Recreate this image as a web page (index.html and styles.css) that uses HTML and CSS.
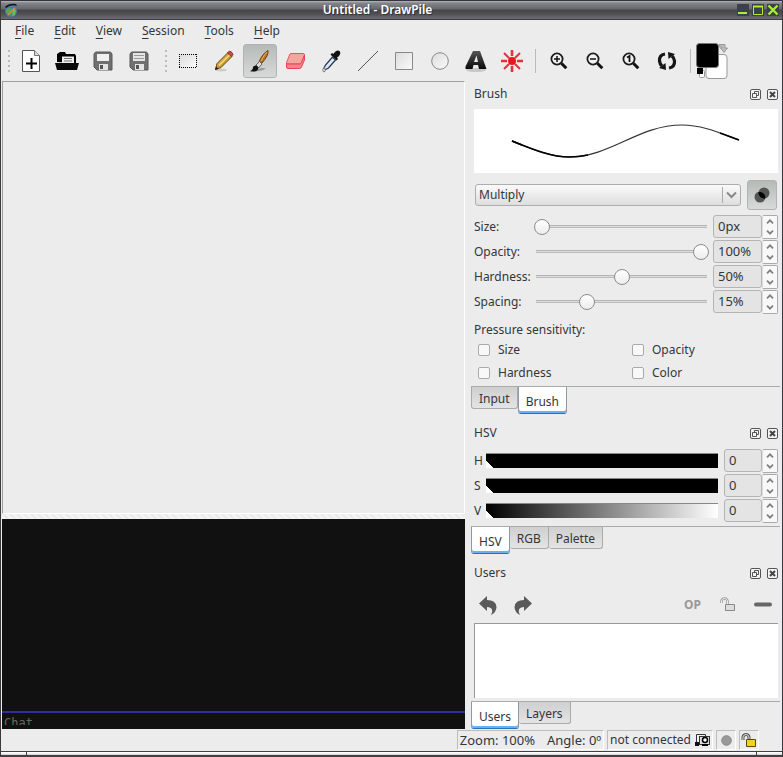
FILE: index.html
```html
<!DOCTYPE html>
<html lang="en">
<head>
<meta charset="utf-8">
<title>Untitled - DrawPile</title>
<link rel="stylesheet" href="styles.css">
</head>
<body>
<svg width="0" height="0" class="defs" aria-hidden="true">
  <defs>
    <linearGradient id="pale" x1="0" y1="0" x2="1" y2="1"><stop offset="0" stop-color="#dcdcdc"/><stop offset="1" stop-color="#fafafa"/></linearGradient>
    <linearGradient id="wood" x1="0" y1="0" x2="1" y2="1"><stop offset="0" stop-color="#f0c860"/><stop offset="1" stop-color="#a87414"/></linearGradient>
    <linearGradient id="ink" x1="0" y1="0" x2="0" y2="1"><stop offset="0" stop-color="#555"/><stop offset="1" stop-color="#0a0a0a"/></linearGradient>
    <symbol id="float" viewBox="0 0 11 11"><rect x=".5" y=".5" width="10" height="10" rx="1.5" fill="#f4f4f4" stroke="#555"/><path d="M4.5 4V2.5h4v4H7M2.500 4.500h4v4h-4z" fill="none" stroke="#555"/></symbol>
    <symbol id="close" viewBox="0 0 11 11"><rect x=".5" y=".5" width="10" height="10" rx="1.500" fill="#f4f4f4" stroke="#555"/><path d="M3 3l5 5M8 3l-5 5" stroke="#444" stroke-width="2"/></symbol>
    <symbol id="up" viewBox="0 0 8 5"><path d="M1 4.300L4 1.300l3 3" fill="none" stroke="#808080" stroke-width="1.800"/></symbol>
    <symbol id="down" viewBox="0 0 8 5"><path d="M1 .7l3 3 3-3" fill="none" stroke="#808080" stroke-width="1.800"/></symbol>
    <symbol id="lens" viewBox="0 0 18 18"><circle cx="7" cy="7" r="5.600" fill="#f2f2f2" stroke="#1c1c1c" stroke-width="1.800"/><path d="M11.300 11.300l5 5" stroke="#111" stroke-width="3"/></symbol>
  </defs>
</svg>
<div class="window">
  <header class="titlebar">
    <svg class="logo" width="14" height="15" viewBox="0 0 14 15"><circle cx="7" cy="8" r="6" fill="#3f7fb4"/><path d="M2 10Q1 6 5 5l4 1-3 6z" fill="#5aa548"/><path d="M9 5l3 2-1 5-3 1z" fill="#6cbc5c"/><path d="M4 12L11 5" stroke="#e08a2c" stroke-width="1.500"/><path d="M1 4Q5 0 12 1l1 2Q7 1 2 5z" fill="#151515"/></svg>
    <h1>Untitled - DrawPile</h1>
    <div class="winbtns">
      <button aria-label="Minimize"><svg width="12" height="12"><path d="M1 9h9" stroke="#a8f030" stroke-width="2"/></svg></button>
      <button aria-label="Maximize"><svg width="12" height="12"><path d="M1.500 2.500h9v8h-9z" fill="none" stroke="#a8f030"/><path d="M1 2.500h10" stroke="#a8f030" stroke-width="2"/></svg></button>
      <button aria-label="Close window"><svg width="12" height="12"><path d="M1.500 1.500l9 9M10.500 1.500l-9 9" stroke="#a8f030" stroke-width="2.300"/></svg></button>
    </div>
  </header>

  <nav class="menubar">
    <button><u>F</u>ile</button><button><u>E</u>dit</button><button><u>V</u>iew</button><button><u>S</u>ession</button><button><u>T</u>ools</button><button><u>H</u>elp</button>
  </nav>

  <div class="toolbar">
    <span class="grip"></span>
    <button aria-label="New"><svg width="20" height="24"><path d="M1.500 1.500h12l5 5v16h-17z" fill="#fff" stroke="#555"/><path d="M13.500 1.500v5h5" fill="#ddd" stroke="#777"/><path d="M5 14.500h11M10.500 9v11" stroke="#000" stroke-width="2"/></svg></button>
    <button aria-label="Open"><svg width="24" height="20"><path d="M2 11V3l3-2h5l1 2h9l1 2v7z" fill="#000"/><path d="M7 5.500h12v7H7z" fill="#eee"/><path d="M9 7.500h8M9 10h8" stroke="#777"/><path d="M0 12h24l-2 7H2z" fill="#0a0a0a"/></svg></button>
    <button aria-label="Save"><svg width="20" height="20"><path d="M2.500 1h15L19 3v16H4l-3-3V3z" fill="#707070" stroke="#585858"/><path d="M4 3h12v7H4z" fill="#f0f0f0"/><path d="M6 13h9v6H6z" fill="#e4e4e4"/><path d="M7 14h3v4H7z" fill="#555"/></svg></button>
    <button aria-label="Save as"><svg width="20" height="20"><path d="M2.500 1h15L19 3v16H4l-3-3V3z" fill="#707070" stroke="#585858"/><path d="M4 2h12v8H4z" fill="#e4e4e4"/><path d="M5 4.500h10M5 7.500h10" stroke="#999"/><path d="M6 13h9v6H6z" fill="#e4e4e4"/><path d="M7 14h3v4H7z" fill="#555"/></svg></button>
    <span class="grip second"></span>
    <button aria-label="Selection"><svg width="18" height="14"><path d="M1 1h16v12H1z" fill="url(#pale)"/><path d="M0 .5h18M0 13.500h18M.5 0v14M17.500 0v14" fill="none" stroke="#000" stroke-dasharray="1 1"/></svg></button>
    <button aria-label="Pencil"><svg width="22" height="22"><ellipse cx="8" cy="20" rx="6" ry="1.500" fill="#ccc"/><path d="M4 13.500L15 2.500l4 4L8 17.500l-5.500 2z" fill="url(#wood)" stroke="#6b4b10"/><path d="M6 15.500L17 4.500" stroke="#f5dd80" stroke-width="1.500"/><path d="M14.500 3l2-2q2 0 3.500 3.500l-1.500 2z" fill="#d64842" stroke="#8c2f28"/><path d="M2 20l1-3.500 2.500 2.300z" fill="#222"/></svg></button>
    <button class="on" aria-label="Brush" aria-pressed="true"><svg width="22" height="24"><path d="M4 22q8 1 13-3l-5 0z" fill="#999"/><path d="M10 13Q13 5 19 1.500q1 4.500-6 12.500z" fill="#b87325" stroke="#704312"/><path d="M12 12Q15 6 18 3" stroke="#eab361" fill="none"/><path d="M7 16l3.500-3.500 2.500 2.500-3.500 4z" fill="#ddd" stroke="#666"/><path d="M1 22q3-1 3-4 1-2 3.500-1.500l2 2q-.5 4-4.500 4-3 0-4-.5z" fill="#111"/></svg></button>
    <button aria-label="Eraser"><svg width="22" height="20"><path d="M6 2.500h12q2 0 1.500 2l-3 7q-.5 1.500-2 1.500H3q-2 0-1.500-1.500l3-7.500q.5-1.500 1.500-1.500z" fill="#f3a5a0" stroke="#e85560"/><path d="M1.500 12q0 1 1.500 1h12q1 0 1.500-1.500l3-7.500v5l-3 7q-.5 1.500-2 1.500H3q-1.500 0-1.500-1.500z" fill="#f58288" stroke="#e34755"/></svg></button>
    <button aria-label="Color picker"><svg width="22" height="24"><path d="M13 4q3-3.500 5.500-2 2 2.500-1 5.500l-1.500 1 1 1.500-1.500 1.500-6-6 1.500-1.500 1.500 1z" fill="#111"/><path d="M11.500 8l3 3-7 8-4 2-1-1 2-4z" fill="#dbe7f7" stroke="#263752" stroke-width="1.300"/><path d="M3 18.500q2.500 3.500 0 4.500-2.500-1 0-4.500z" fill="#eee" stroke="#777"/></svg></button>
    <button aria-label="Line"><svg width="22" height="22"><path d="M1 21L21 1" stroke="#555"/></svg></button>
    <button aria-label="Rectangle"><svg width="18" height="18"><path d="M.5.5h17v17H.5z" fill="url(#pale)" stroke="#888"/></svg></button>
    <button aria-label="Ellipse"><svg width="18" height="18"><circle cx="9" cy="9" r="8.300" fill="url(#pale)" stroke="#888"/></svg></button>
    <button aria-label="Text"><svg width="24" height="24"><ellipse cx="12" cy="21" rx="10" ry="2" fill="#c8c8c8"/><path d="M9 2h7l6.500 18H15l-1-4H9.500l-1 4h-7v-2.500zM12.500 6.500L10 13h4z" fill="url(#ink)" fill-rule="evenodd"/></svg></button>
    <button aria-label="Laser pointer"><svg width="24" height="24"><g stroke="#e0323c" stroke-width="2"><path d="M12 1v6M12 17v6M1 12h6M17 12h6" stroke-width="2.600"/><path d="M4 4l5 5M15 15l5 5M20 4l-5 5M9 15l-5 5"/></g><circle cx="12" cy="12" r="4" fill="#e8161d"/></svg></button>
    <span class="sep"></span>
    <button aria-label="Zoom in"><svg width="18" height="18"><use href="#lens"/><path d="M4 7h6M7 4v6" stroke="#111" stroke-width="1.500"/></svg></button>
    <button aria-label="Zoom out"><svg width="18" height="18"><use href="#lens"/><path d="M4 7h6" stroke="#111" stroke-width="1.500"/></svg></button>
    <button aria-label="Actual size"><svg width="18" height="18"><use href="#lens"/><path d="M5 5.500L7.500 4v6" stroke="#111" stroke-width="1.800" fill="none"/></svg></button>
    <button aria-label="Reset rotation"><svg width="20" height="20"><path d="M8 3Q2 4 2.500 10q.3 3 2.500 5M12 17q6-1 5.500-7-.3-3-2.500-5" fill="none" stroke="#161616" stroke-width="3.200"/><path d="M2 17l7 2-.5-7zM18 3l-7-2 .5 7z" fill="#161616"/></svg></button>
    <span class="sep"></span>
    <button class="swatch" aria-label="Colors"><svg width="34" height="36"><rect x="10" y="11.500" width="21" height="24" rx="3" fill="#fff" stroke="#999"/><rect x="3.500" y="27.500" width="5" height="7" rx="1" fill="#fff" stroke="#999"/><path d="M1 25h6v6H1z" fill="#000"/><rect x=".5" y=".5" width="22" height="24" rx="3" fill="#000" stroke="#777"/><path d="M23 1.500h6V5h2.500L28 9.500 24.500 5H26V4h-3z" fill="#bbb" stroke="#999"/></svg></button>
  </div>

  <main class="work">
    <section class="left">
      <div class="canvas"></div>
      <div class="splitter"></div>
      <div class="chatlog"></div>
      <div class="chatline"><input type="text" placeholder="Chat" aria-label="Chat"></div>
    </section>

    <aside class="docks">
      <section class="dock">
        <header><h2>Brush</h2><button aria-label="Float Brush"><svg width="11" height="11"><use href="#float"/></svg></button><button aria-label="Close Brush"><svg width="11" height="11"><use href="#close"/></svg></button></header>
        <svg class="preview" viewBox="0 0 304 64" preserveAspectRatio="none"><path d="M38 32C58 40 77 48 95 48C137 48 164 16 208 16C228 16 246 24 265 31" fill="none" stroke="#333" stroke-width="1.200"/><path d="M38 32C58 40 77 48 95 48q10 0 19-2" fill="none" stroke="#000" stroke-width="1.700"/><path d="M38 32l10 4M246 24l19 7" stroke="#000" stroke-width="1.800"/></svg>
        <div class="blend">
          <div class="combo"><select aria-label="Blend mode"><option>Multiply</option></select><svg width="11" height="8"><path d="M1 1.500l4.500 4.500L10 1.500" fill="none" stroke="#888" stroke-width="2"/></svg></div>
          <button class="mode" aria-label="Incremental" aria-pressed="true"><svg width="18" height="18"><circle cx="11" cy="7" r="5.500" fill="#555"/><circle cx="7" cy="11" r="5.500" fill="#555"/><path d="M5.500 6.300A5.500 5.500 0 0 1 12.300 12.300A5.500 5.500 0 0 1 5.500 6.300z" fill="#000"/></svg></button>
        </div>
        <div class="settings">
          <label for="size">Size:</label><input id="size" type="range" value="0"><div class="spin"><input type="text" value="0px" aria-label="Size value"><div><button aria-label="Increase size"><svg width="8" height="5"><use href="#up"/></svg></button><button aria-label="Decrease size"><svg width="8" height="5"><use href="#down"/></svg></button></div></div>
          <label for="opacity">Opacity:</label><input id="opacity" type="range" value="100"><div class="spin"><input type="text" value="100%" aria-label="Opacity value"><div><button aria-label="Increase opacity"><svg width="8" height="5"><use href="#up"/></svg></button><button aria-label="Decrease opacity"><svg width="8" height="5"><use href="#down"/></svg></button></div></div>
          <label for="hard">Hardness:</label><input id="hard" type="range" value="50"><div class="spin"><input type="text" value="50%" aria-label="Hardness value"><div><button aria-label="Increase hardness"><svg width="8" height="5"><use href="#up"/></svg></button><button aria-label="Decrease hardness"><svg width="8" height="5"><use href="#down"/></svg></button></div></div>
          <label for="space">Spacing:</label><input id="space" type="range" value="28"><div class="spin"><input type="text" value="15%" aria-label="Spacing value"><div><button aria-label="Increase spacing"><svg width="8" height="5"><use href="#up"/></svg></button><button aria-label="Decrease spacing"><svg width="8" height="5"><use href="#down"/></svg></button></div></div>
        </div>
        <p class="caption">Pressure sensitivity:</p>
        <div class="checks">
          <label><input type="checkbox">Size</label><label><input type="checkbox">Opacity</label>
          <label><input type="checkbox">Hardness</label><label><input type="checkbox">Color</label>
        </div>
        <div class="tabs"><button>Input</button><button class="active">Brush</button></div>
      </section>

      <section class="dock">
        <header><h2>HSV</h2><button aria-label="Float HSV"><svg width="11" height="11"><use href="#float"/></svg></button><button aria-label="Close HSV"><svg width="11" height="11"><use href="#close"/></svg></button></header>
        <div class="hsv">
          <label for="h">H</label><div class="bar"></div><div class="spin"><input id="h" type="text" value="0"><div><button aria-label="Increase hue"><svg width="8" height="5"><use href="#up"/></svg></button><button aria-label="Decrease hue"><svg width="8" height="5"><use href="#down"/></svg></button></div></div>
          <label for="s">S</label><div class="bar"></div><div class="spin"><input id="s" type="text" value="0"><div><button aria-label="Increase saturation"><svg width="8" height="5"><use href="#up"/></svg></button><button aria-label="Decrease saturation"><svg width="8" height="5"><use href="#down"/></svg></button></div></div>
          <label for="v">V</label><div class="bar value"></div><div class="spin"><input id="v" type="text" value="0"><div><button aria-label="Increase value"><svg width="8" height="5"><use href="#up"/></svg></button><button aria-label="Decrease value"><svg width="8" height="5"><use href="#down"/></svg></button></div></div>
        </div>
        <div class="tabs"><button class="active">HSV</button><button>RGB</button><button>Palette</button></div>
      </section>

      <section class="dock users">
        <header><h2>Users</h2><button aria-label="Float Users"><svg width="11" height="11"><use href="#float"/></svg></button><button aria-label="Close Users"><svg width="11" height="11"><use href="#close"/></svg></button></header>
        <div class="actions">
          <button aria-label="Undo"><svg width="18" height="20"><path d="M0 8.500L8 1v4q9 0 9.500 7 0 5-5.500 8 2-3 1-5.500-1-2.500-5-2.500v4z" fill="#5a5a5a"/></svg></button>
          <button aria-label="Redo"><svg width="18" height="20"><path d="M18 8.500L10 1v4Q1 5 .5 12q0 5 5.500 8-2-3-1-5.500Q6 12 10 12v4z" fill="#5a5a5a"/></svg></button>
          <span class="space"></span>
          <button class="op">OP</button>
          <button aria-label="Lock user"><svg width="16" height="16"><path d="M1.500 6V4q.5-2.500 3-2.500T7.500 4v3" fill="none" stroke="#999" stroke-width="2.500"/><path d="M1.500 6V4q.5-2.500 3-2.500T7.500 4v3" fill="none" stroke="#eee"/><path d="M5.500 7.500h9v6h-9z" fill="#ddd" stroke="#888"/></svg></button>
          <button aria-label="Kick user"><svg width="18" height="5"><rect y=".5" width="18" height="4" rx="2" fill="#666"/></svg></button>
        </div>
        <div class="list"></div>
        <div class="tabs"><button class="active">Users</button><button>Layers</button></div>
      </section>
    </aside>
  </main>

  <footer class="status">
    <div class="cell view"><span>Zoom: 100%</span><span>Angle: 0º</span></div>
    <div class="cell net"><span>not connected</span><svg width="15" height="14"><path d="M1.500 10V1.500h9V4" fill="#eee" stroke="#333"/><rect x="4.500" y="3.500" width="10" height="8" fill="#ddd" stroke="#333"/><circle cx="10" cy="7" r="2.500" fill="#fff" stroke="#000" stroke-width="1.500"/><path d="M7 12h6" stroke="#000" stroke-width="2"/><path d="M0 9h4v4H0z" fill="#111"/></svg></div>
    <div class="cell small"><svg width="11" height="11"><circle cx="5.500" cy="5.500" r="4.800" fill="#999" stroke="#888"/></svg></div>
    <div class="cell small"><svg width="16" height="15"><path d="M2 7V4q.5-2.500 3-2.500T8 4v3" fill="none" stroke="#555" stroke-width="3"/><path d="M2 7V4q.5-2.500 3-2.500T8 4v3" fill="none" stroke="#ddd"/><path d="M5.500 6.500h9v7h-9z" fill="#f2d51b" stroke="#554a08"/></svg></div>
  </footer>
  <div class="frame"></div>
</div>
</body>
</html>
```
FILE: styles.css
```css
* { box-sizing: border-box; }
body {
  margin: 0;
  background: #ececec;
  color: #333639;
  font: 12px/16px "Noto Sans", "Open Sans", sans-serif;
}
button, input, select { font: inherit; color: inherit; }
button { padding: 0; border: 0; background: none; }
svg { display: block; flex: none; }
h1, h2, p { margin: 0; font-size: inherit; }
.defs { position: absolute; }

.window {
  display: flex;
  flex-direction: column;
  min-height: 100vh;
  border: solid #3a393d;
  border-width: 0 1px;
}

.titlebar {
  display: flex;
  align-items: center;
  height: 20px;
  padding: 0 3px;
  border-top: 1px solid #34343a;
  border-bottom: 1px solid #3c3b40;
  background: linear-gradient(#b8b8be 0, #85858c 2px, #66666c 8px, #454549 9px, #505054 13px, #6c6c74 18px);
  color: #fff;
}
.titlebar h1 { flex: 1; text-align: center; font-weight: 600; text-shadow: 1px 1px #333; }
.winbtns { display: flex; gap: 3px; }
.winbtns button { background: #3c4048; }

.menubar { display: flex; gap: 20px; height: 22px; padding-left: 14px; }
.menubar u { text-underline-offset: 3px; }

.toolbar { display: flex; align-items: center; height: 39px; padding: 0 0 1px 5px; }
.toolbar button { display: grid; place-items: center; width: 34px; height: 34px; margin: 0 1px; }
.toolbar .on {
  border: 1px solid #b0b3b1;
  border-radius: 3px;
  background: linear-gradient(#b5bab7, #d8dad9);
}
.grip { width: 7px; height: 25px; background: radial-gradient(circle at 3px 2px, #bbb 1px, transparent 1px) 0 0 / 7px 5px repeat-y; }
.grip.second { margin: 0 0 0 6px; }
.sep { width: 1px; height: 24px; margin: 0 5px; background: #bababa; }
.toolbar .swatch { width: 34px; height: 36px; margin: 0; }

.work { display: flex; flex: 1; }
.left { display: flex; flex: 1; flex-direction: column; min-width: 0; padding-left: 1px; }
.canvas { flex: 1; border: 1px solid; border-color: #a0a0a0 #fff #fff #a0a0a0; }
.splitter { height: 5px; background: repeating-linear-gradient(45deg, #f4f4f4 0 3px, #ebebeb 3px 5px); }
.chatlog { height: 192px; background: #111; }
.chatline { height: 18px; padding-bottom: 4px; border-top: 2px solid #302e9c; background: #111; }
.chatline input {
  display: block;
  width: 100%;
  height: 12px;
  padding: 7px 2px 0;
  border: 0;
  outline: 0;
  background: none;
  color: #888;
  font: 12px/14px "DejaVu Sans Mono", monospace;
}
.chatline input::placeholder { color: #686868; }

.docks { display: flex; flex-direction: column; width: 317px; padding-left: 6px; }
.dock { padding: 0 4px 0 3px; }
.dock header { display: flex; align-items: center; gap: 6px; height: 26px; }
.dock h2 { flex: 1; font-weight: 400; }
.preview { width: 100%; height: 64px; margin-top: 2px; background: #fff; }
.blend { display: flex; align-items: center; gap: 6px; height: 30px; margin: 7px 1px 4px; }
.combo { position: relative; flex: 1; }
.combo select {
  display: block;
  appearance: none;
  width: 100%;
  height: 22px;
  padding: 0 3px;
  border: 1px solid #adadad;
  border-radius: 3px;
  background: linear-gradient(#fafafa, #dedede);
}
.combo svg { position: absolute; top: 3px; right: 4px; box-sizing: content-box; padding: 4px 0 4px 3px; border-left: 1px solid #aaa; }
.mode {
  display: grid;
  place-items: center;
  width: 30px;
  height: 30px;
  border: 1px solid #b0b3b1;
  border-radius: 3px;
  background: linear-gradient(#b5bab7, #d8dad9);
}

.settings { display: grid; grid-template-columns: 60px 1fr 65px; column-gap: 0; grid-auto-rows: 25px; align-items: center; }
.settings label { white-space: nowrap; }
.settings input[type="range"] {
  appearance: none;
  width: calc(100% - 4px);
  height: 16px;
  margin: 0;
  background: linear-gradient(#b4b4b4 0 1px, #ddd 1px 2px, #bbb 2px 3px) center / calc(100% - 4px) 3px no-repeat;
}
input[type="range"]::-webkit-slider-thumb {
  appearance: none;
  width: 16px;
  height: 16px;
  border: 1px solid #8c8c8c;
  border-radius: 50%;
  background: linear-gradient(#fff, #ededed);
}
.spin { display: flex; height: 24px; }
.spin > input {
  flex: 1;
  width: 0;
  height: 23px;
  padding: 0 4px;
  border: 1px solid #b4b4b4;
  border-radius: 3px;
  background: #e4e4e4;
  font-size: 13px;
}
.spin > div { display: flex; flex-direction: column; width: 16px; border: 1px solid #aaa; border-left-color: #ddd; border-radius: 2px; background: #f8f8f8; }
.spin button { display: grid; flex: 1; place-items: center; }

.caption { margin-top: 8px; }
.checks { display: grid; grid-template-columns: 1fr 1fr; grid-auto-rows: 23px; align-items: center; gap: 0 4px; margin: 0 0 2px 4px; }
.checks label { display: flex; align-items: center; gap: 8px; }
.checks label:nth-child(even) { padding-left: 2px; }
.checks input { appearance: none; width: 12px; height: 12px; margin: 0; border: 1px solid #aaa; border-radius: 2px; background: #f8f8f8; }

.tabs { display: flex; align-items: flex-start; height: 28px; margin: 0 -2px 0 -3px; border-top: 1px solid #aaa; }
.tabs button { height: 22px; padding: 4px 7px 1px; border: solid #aaa; border-width: 0 1px 1px 0; border-radius: 0 0 3px 3px; background: linear-gradient(#cfcfcf, #e4e4e4); }
.tabs button:first-child { border-left-width: 1px; }
.tabs .active { height: 27px; border: 1px solid #8c9aa8; border-top: 0; border-bottom: 1px solid #2b70b8; background: #fff; box-shadow: inset 0 -2px #6aaff0; }

.dock + .dock { padding-top: 6px; }
.hsv { display: grid; grid-template-columns: 12px 1fr 54px; grid-auto-rows: 25px; align-items: center; margin: 2px 0 3px; }
.bar {
  height: 15px;
  margin-right: 6px;
  border-top: 1px solid #888;
  background: linear-gradient(45deg, #fff 5px, transparent 5px), #000;
}
.bar.value { background: linear-gradient(45deg, #fff 5px, transparent 5px), linear-gradient(90deg, #000, #fff); }

.users { display: flex; flex: 1; flex-direction: column; }
.actions { display: flex; align-items: center; height: 37px; padding-left: 5px; }
.actions button { display: grid; place-items: center; width: 35px; }
.actions button:first-child, .actions button:nth-child(2) { width: 18px; margin-right: 17px; }
.actions button:last-child { margin-right: -2px; }
.space { flex: 1; }
.actions .op { color: #989898; font-weight: 700; }
.list { flex: 1; margin-bottom: 3px; border: solid #999; border-width: 1px 0 0 1px; background: #fff; }

.status { display: flex; gap: 3px; height: 22px; padding: 1px 23px 1px 0; justify-content: flex-end; }
.cell { display: flex; align-items: center; justify-content: center; border: 1px solid #bdbdbd; border-right-color: #fff; border-bottom-color: #fff; white-space: nowrap; }
.view { gap: 12px; width: 147px; font-size: 13px; }
.net { gap: 4px; width: 106px; }
.small { width: 20px; }
.frame { height: 6px; border: solid #424045; border-width: 1px 0 2px; background: linear-gradient(#424045, #424045) 25px 0 / 1px 3px no-repeat, linear-gradient(#424045, #424045) calc(100% - 25px) 0 / 1px 3px no-repeat, linear-gradient(#fff 1px, #ccc 3px); }
```
